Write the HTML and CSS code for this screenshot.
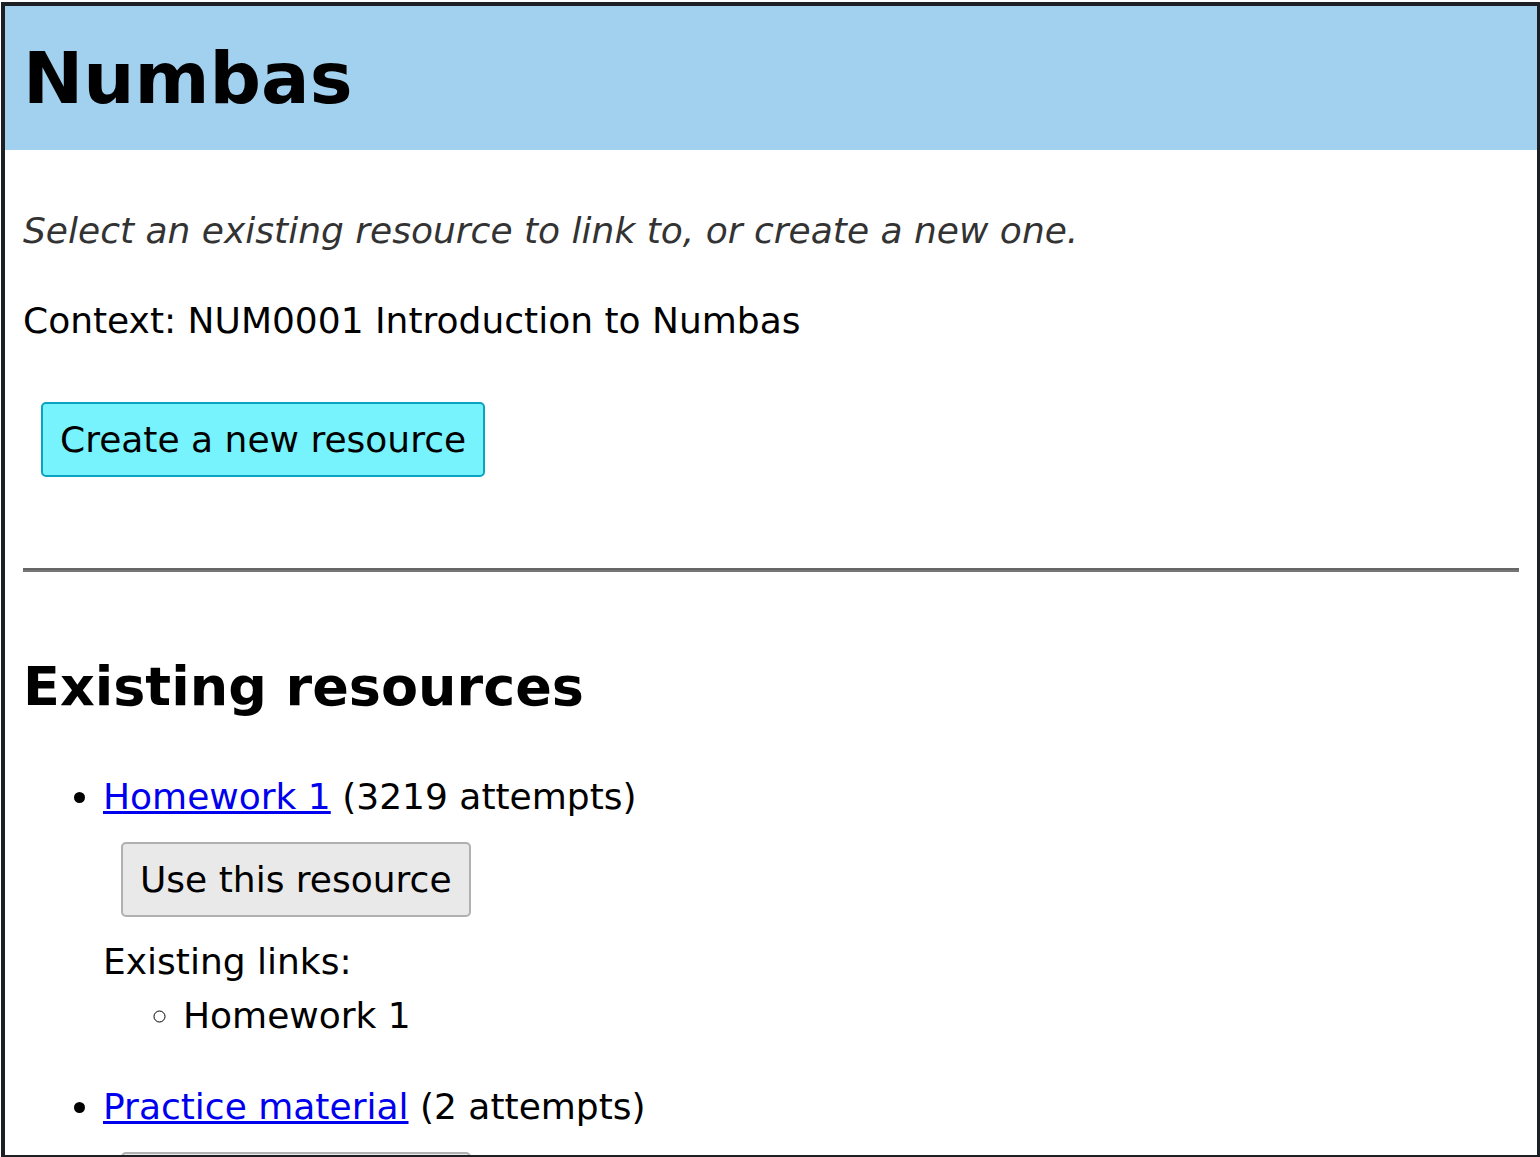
FILE: index.html
```html
<!DOCTYPE html>
<html lang="en">
<head>
<meta charset="utf-8">
<title>Numbas</title>
<link rel="stylesheet" href="styles.css">
</head>
<body>
<div class="frame">
  <header class="site-header">
    <h1 class="site-title">Numbas</h1>
  </header>
  <main class="content">
    <p class="intro">Select an existing resource to link to, or create a new one.</p>
    <p class="context">Context: NUM0001 Introduction to Numbas</p>
    <form class="create-form">
      <button type="button" class="btn btn-primary">Create a new resource</button>
    </form>
    <hr class="divider">
    <h2 class="section-title">Existing resources</h2>
    <ul class="resource-list">
      <li class="resource">
        <a href="#" class="resource-link">Homework 1</a> (3219 attempts)
        <div class="resource-actions"><button type="button" class="btn btn-secondary">Use this resource</button></div>
        <div class="existing-links">Existing links:</div>
        <ul class="link-list">
          <li>Homework 1</li>
        </ul>
      </li>
      <li class="resource">
        <a href="#" class="resource-link">Practice material</a> (2 attempts)
        <div class="resource-actions"><button type="button" class="btn btn-secondary">Use this resource</button></div>
      </li>
    </ul>
  </main>
</div>
</body>
</html>
```

FILE: styles.css
```css
html, body {
  margin: 0;
  padding: 0;
  overflow: hidden;
  background: #ffffff;
}

body {
  font-family: "DejaVu Sans", sans-serif;
  font-size: 36px;
  line-height: 1.5;
  color: #000000;
}

.frame {
  box-sizing: border-box;
  width: 100vw;
  height: 100vh;
  margin: 2px 0 0 1px;
  border: 4px solid #1c2024;
  overflow: hidden;
}

.site-header {
  background: #a2d1ef;
  padding: 18px;
}

.site-title {
  margin: 0;
  font-size: 72px;
  font-weight: bold;
  line-height: 1.5;
}

.content {
  padding: 18px;
}

.intro {
  margin: 36px 0;
  font-style: italic;
  color: #333333;
}

.context {
  margin: 36px 0;
}

.create-form {
  margin: 36px 0 73px;
}

.btn {
  font-family: "DejaVu Sans", sans-serif;
  font-size: 36px;
  line-height: 1.5;
  margin: 18px;
  padding: 8.5px 17px;
  border-radius: 5px;
  color: #000000;
}

.btn-primary {
  background: #77f3fd;
  border: 2px solid #0aa3c2;
}

.btn-secondary {
  background: #e9e9e9;
  border: 2px solid #b0b0b0;
}

.divider {
  margin: 0;
  height: 0;
  border: 0;
  border-top: 2px solid #666666;
  border-bottom: 2px solid #767676;
}

.section-title {
  margin: 74px 0 43px;
  font-size: 54px;
  font-weight: bold;
  line-height: 1.5;
}

.resource-list {
  margin: 0;
  padding-left: 80px;
  list-style: disc;
}

.resource + .resource {
  margin-top: 37px;
}

.resource-link {
  color: #0000ee;
  text-decoration: underline;
}

.resource-actions {
  margin: 0;
}

.link-list {
  margin: 0;
  padding-left: 80px;
  list-style: circle;
}
```
